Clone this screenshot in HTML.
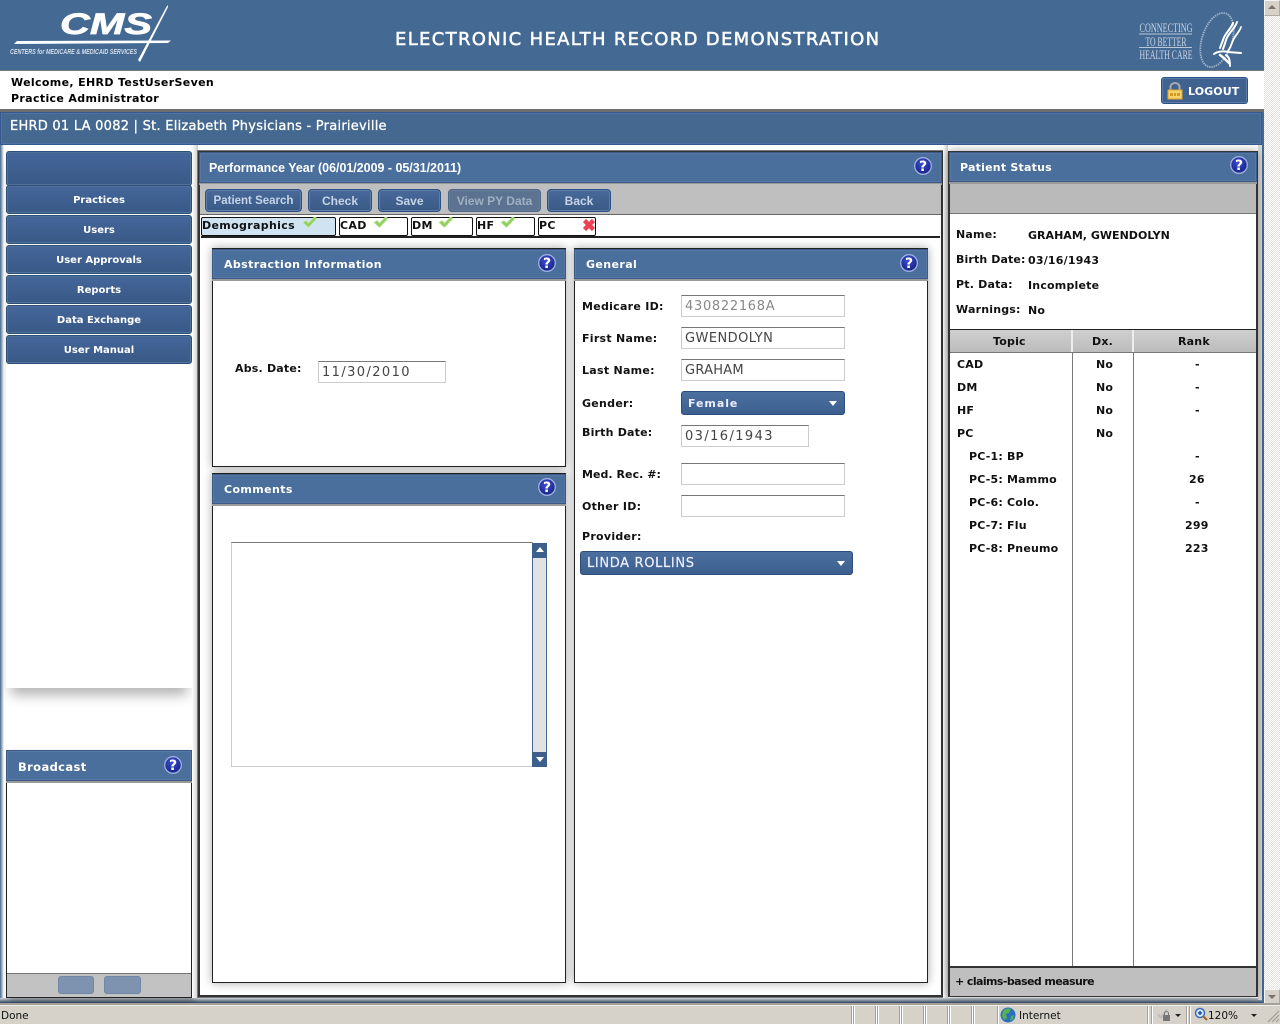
<!DOCTYPE html>
<html><head><meta charset="utf-8"><style>
html,body{margin:0;padding:0;width:1280px;height:1024px;overflow:hidden;background:#fff}
*{box-sizing:border-box}
div,span,svg{position:absolute}
body{font-family:"DejaVu Sans","Liberation Sans",sans-serif;font-size:11px;color:#111}
.t{white-space:nowrap;line-height:14px;font-weight:bold}
.lb{letter-spacing:.28px}
.ps{letter-spacing:.2px}
.nav{left:6px;width:186px;height:29px;background:linear-gradient(#44669a,#395a86);border:1px solid #2f4e78;border-radius:3px;box-shadow:inset 0 0 0 1px #4f7099;color:#fff;text-align:center;font:bold 10px/29px "DejaVu Sans",sans-serif}
.btn{top:189px;height:23px;background:linear-gradient(#48699a,#3a5a86);border:1px solid #2f5082;border-radius:4px;box-shadow:inset 0 0 0 1px #5b7ca5;color:#c5d4e6;text-align:center;font:bold 12px/22px "Liberation Sans",sans-serif}
.pnl{background:#fff;border:1px solid #222;box-shadow:0 0 9px rgba(0,0,0,.35)}
.hd{height:30px;background:#4a6f9c;border:1px solid #3a5a85;box-shadow:inset 0 0 0 1px #5878a3,0 2px 0 #9a9a9a;color:#fff;font:bold 11px/29px "DejaVu Sans",sans-serif;letter-spacing:.4px;padding-left:11px;white-space:nowrap}
.q{width:18px;height:18px}
.tab{top:217px;height:19px;border:1px solid #111;background:#fff;border-radius:2px;font:bold 11px/16px "DejaVu Sans",sans-serif;letter-spacing:.35px;padding-left:0}
.inp{background:#fff;border:1px solid #ccc;border-top-color:#777;color:#444;font:13px/22px "DejaVu Sans",sans-serif;letter-spacing:.85px;padding-left:3px;white-space:nowrap}
.sel{background:linear-gradient(#4b709f,#3c5f8e);border:1px solid #2d4e7c;border-radius:3px;color:#eef;white-space:nowrap}
.sel:after{content:"";position:absolute;right:7px;top:9px;border:4px solid transparent;border-top:5px solid #fff;border-bottom:0}
.sb{background:#d6d2ca}
.sep{top:1006px;width:1px;height:18px;background:#a5a196;box-shadow:1px 0 0 #fff}
</style></head><body>
<svg width="1" height="1" style="left:-10px;top:-10px"><defs>
<radialGradient id="qg" cx=".45" cy=".35" r=".7"><stop offset="0" stop-color="#3a4ed0"/><stop offset="1" stop-color="#14207f"/></radialGradient>
<g id="q"><circle cx="9" cy="9" r="8.300" fill="url(#qg)" stroke="#9fb0e0" stroke-width="1.300"/><text x="9" y="14" font-family="DejaVu Sans" font-weight="bold" font-size="14" fill="#fff" text-anchor="middle">?</text></g>
<g id="ck"><path d="M1 6.500l3-2 2.500 2.500 6-6 2.500 1.500-8.500 9z" fill="#8fd05c" stroke="#c4e4a6" stroke-width=".8"/></g>
</defs></svg>

<div style="left:0;top:0;width:1264px;height:70px;background:#446993"></div>
<div style="left:0;top:70px;width:1264px;height:1px;background:#777"></div>
<div style="left:0;top:71px;width:1264px;height:38px;background:#fff"></div>
<div style="left:0;top:109px;width:1264px;height:3px;background:#6f6f6f"></div>

<!-- CMS logo -->
<svg style="left:0;top:0" width="180" height="70">
<path d="M167.500 5 L168 7 L140 62 L138 60z" fill="#fff"/>
<path d="M17 41 L171 40.500 L168 43 L14 44z" fill="#fff"/>
<text x="60" y="34" font-family="Liberation Sans" font-weight="bold" font-style="italic" font-size="30" fill="#fff" stroke="#fff" stroke-width=".7" textLength="92" lengthAdjust="spacingAndGlyphs">CMS</text>
<text x="10" y="54" font-family="Liberation Sans" font-style="italic" font-weight="bold" font-size="7.500" fill="#d5deea" textLength="127" lengthAdjust="spacingAndGlyphs">CENTERS for MEDICARE &amp; MEDICAID SERVICES</text>
</svg>
<div class="t" style="left:395px;top:29px;color:#fff;font-size:18px;line-height:22px;font-weight:normal;-webkit-text-stroke:.5px #fff;letter-spacing:1.32px">ELECTRONIC HEALTH RECORD DEMONSTRATION</div>

<!-- HHS -->
<svg style="left:1130px;top:8px" width="120" height="64">
<g font-family="Liberation Serif" font-size="12.500" fill="#c8d5e4" text-anchor="middle">
<text x="36" y="24" textLength="53" lengthAdjust="spacingAndGlyphs">CONNECTING</text>
<text x="36" y="38" textLength="41" lengthAdjust="spacingAndGlyphs">TO BETTER</text>
<text x="36" y="51" textLength="53" lengthAdjust="spacingAndGlyphs">HEALTH CARE</text></g>
<path d="M9 26h53M9 39.500h53" stroke="#b9c7d8" stroke-width="1"/>
<ellipse cx="87" cy="32" rx="15" ry="28" fill="none" stroke="#9fb2c9" stroke-width="1.800" stroke-dasharray="1.500 .8" transform="rotate(18 87 32)"/>
<g fill="none" stroke="#fff" stroke-linecap="round">
<path d="M107 14c-2 7-9 11-11 18-1 4-2 6-3 9" stroke-width="2"/>
<path d="M103 15c-2 6-8 10-10 17-1 3-2 5-3 8" stroke-width="2"/>
<path d="M111 19c-2 6-7 9-9 16-1 3-2 5-4 8" stroke-width="1.800"/>
<path d="M84 46c4-3 10-3 14-2l13 1" stroke-width="2"/>
<path d="M90 47c3 2 6 5 9 8" stroke-width="2.500"/>
<path d="M96 47c3 2 4 5 4 11" stroke-width="2"/>
</g>
</svg>

<div class="t" style="left:11px;top:75px;color:#000;line-height:16px;letter-spacing:.35px">Welcome, EHRD TestUserSeven<br>Practice Administrator</div>

<div style="left:1161px;top:77px;width:87px;height:27px;background:#3f6290;border:1px solid #2f5082;border-radius:3px;box-shadow:inset 0 0 0 1px #5a7ca6"></div>
<svg style="left:1167px;top:82px" width="16" height="18"><path d="M3.500 8V5a4.500 4 0 0 1 9 0v3" fill="none" stroke="#a8a8a8" stroke-width="2"/><rect x="1" y="8" width="14" height="9" fill="#f6d468" stroke="#e3a52e"/><path d="M3 11h3v3H3zM7 11h2v3H7zM10 11h3v3h-3z" fill="#d49a28"/></svg>
<div class="t" style="left:1188px;top:85px;color:#fff;font-size:11px;letter-spacing:.1px">LOGOUT</div>

<!-- practice bar -->
<div style="left:0;top:112px;width:1262px;height:33px;background:#44688f;border:1px solid #35598f;box-shadow:inset 0 0 0 1px #4f73a3"></div>
<div class="t" style="left:10px;top:118px;color:#fff;font-size:13px;line-height:18px;font-weight:normal;-webkit-text-stroke:.3px #fff;letter-spacing:.25px">EHRD 01 LA 0082 | St. Elizabeth Physicians - Prairieville</div>

<!-- frame edges -->
<div style="left:0;top:145px;width:1262px;height:853px;background:#fff"></div>
<div style="left:0;top:145px;width:4px;height:853px;background:linear-gradient(90deg,#44688f,#fff)"></div>
<div style="left:0;top:998px;width:1264px;height:5px;background:linear-gradient(#cfd3d8,#2f4562)"></div>
<div style="left:1258px;top:145px;width:4px;height:855px;background:#d8d8d8"></div>
<div style="left:1262px;top:112px;width:2px;height:893px;background:#446993"></div>

<!-- left nav -->
<div style="left:6px;top:151px;width:186px;height:537px;background:#fff;box-shadow:0 12px 12px -5px rgba(0,0,0,.3)"></div>
<div class="nav" style="top:151px;height:35px"></div>
<div class="nav" style="top:185px">Practices</div>
<div class="nav" style="top:215px">Users</div>
<div class="nav" style="top:245px">User Approvals</div>
<div class="nav" style="top:275px">Reports</div>
<div class="nav" style="top:305px">Data Exchange</div>
<div class="nav" style="top:335px">User Manual</div>

<!-- broadcast -->
<div style="left:6px;top:750px;width:186px;height:248px;background:#fff;border:1px solid #222;box-shadow:3px 3px 6px rgba(0,0,0,.3)"></div>
<div class="hd" style="left:6px;top:750px;width:186px;height:31px;font-size:11.500px;letter-spacing:.37px;line-height:33px">Broadcast</div>
<svg class="q" style="left:164px;top:756px"><use href="#q"/></svg>
<div style="left:7px;top:973px;width:184px;height:24px;background:#c2c2c2;border-top:1px solid #777"></div>
<div style="left:58px;top:976px;width:36px;height:18px;background:#7d93b0;border:1px solid #7088a8;border-radius:3px"></div>
<div style="left:104px;top:976px;width:37px;height:18px;background:#7d93b0;border:1px solid #7088a8;border-radius:3px"></div>

<!-- center -->
<div style="left:192px;top:145px;width:6px;height:853px;background:linear-gradient(90deg,#fff,#ccc)"></div>
<div style="left:198px;top:151px;width:745px;height:846px;background:#fff;border:2px solid #333;box-shadow:0 0 0 1px #777"></div>
<div class="hd" style="left:199px;top:152px;width:743px;height:31px;font:bold 12.450px/31px 'Liberation Sans',sans-serif;letter-spacing:0;padding-left:9px">Performance Year (06/01/2009 - 05/31/2011)</div>
<svg class="q" style="left:914px;top:157px"><use href="#q"/></svg>
<div style="left:200px;top:184px;width:741px;height:31px;background:#bfbfbf;border-bottom:1px solid #666"></div>
<div class="btn" style="left:205px;width:97px;font-size:11.500px">Patient Search</div>
<div class="btn" style="left:308px;width:64px">Check</div>
<div class="btn" style="left:378px;width:63px">Save</div>
<div class="btn" style="left:448px;width:93px;background:#5b7290;color:#9fb0c2;box-shadow:inset 0 0 0 1px #667c99;border-color:#4d6686">View PY Data</div>
<div class="btn" style="left:547px;width:64px">Back</div>

<div style="left:201px;top:236px;width:739px;height:2px;background:#222"></div>
<div class="tab" style="left:201px;width:135px;background:#cfe3f2">Demographics</div>
<div class="tab" style="left:339px;width:69px">CAD</div>
<div class="tab" style="left:411px;width:62px">DM</div>
<div class="tab" style="left:476px;width:59px">HF</div>
<div class="tab" style="left:538px;width:58px">PC</div>
<svg style="left:302px;top:216px" width="16" height="13"><use href="#ck"/></svg>
<svg style="left:373px;top:216px" width="16" height="13"><use href="#ck"/></svg>
<svg style="left:438px;top:216px" width="16" height="13"><use href="#ck"/></svg>
<svg style="left:500px;top:216px" width="16" height="13"><use href="#ck"/></svg>
<svg style="left:581px;top:217px" width="16" height="16"><path d="M3.500 3.500L12.500 12.500M12.500 3.500L3.500 12.500" stroke="#ea4452" stroke-width="4.500"/></svg>

<!-- abstraction -->
<div class="pnl" style="left:212px;top:248px;width:354px;height:219px"></div>
<div class="hd" style="left:212px;top:249px;width:354px">Abstraction Information</div>
<svg class="q" style="left:538px;top:254px"><use href="#q"/></svg>
<div class="t" style="left:235px;top:362px;letter-spacing:.2px">Abs. Date:</div>
<div class="inp" style="left:318px;top:361px;width:128px;height:22px;letter-spacing:1.400px">11/30/2010</div>

<!-- comments -->
<div class="pnl" style="left:212px;top:473px;width:354px;height:510px"></div>
<div class="hd" style="left:212px;top:474px;width:354px">Comments</div>
<svg class="q" style="left:538px;top:478px"><use href="#q"/></svg>
<div style="left:231px;top:542px;width:302px;height:225px;border:1px solid #ccc;border-top-color:#777"></div>
<div style="left:532px;top:543px;width:15px;height:224px;background:#e2e2e2;border:1px solid #46699a"></div>
<div style="left:532px;top:543px;width:15px;height:15px;background:#3d5f8c"></div>
<div style="left:532px;top:752px;width:15px;height:15px;background:#3d5f8c"></div>
<div style="left:536px;top:547px;border:4px solid transparent;border-bottom:5px solid #fff;border-top:0"></div>
<div style="left:536px;top:757px;border:4px solid transparent;border-top:5px solid #fff;border-bottom:0"></div>

<!-- general -->
<div class="pnl" style="left:574px;top:248px;width:354px;height:735px"></div>
<div class="hd" style="left:574px;top:249px;width:354px">General</div>
<svg class="q" style="left:900px;top:254px"><use href="#q"/></svg>
<div class="t lb" style="left:582px;top:300px">Medicare ID:</div>
<div class="inp" style="left:681px;top:295px;width:164px;height:22px;color:#888;letter-spacing:.7px">430822168A</div>
<div class="t lb" style="left:582px;top:332px">First Name:</div>
<div class="inp" style="left:681px;top:327px;width:164px;height:22px;letter-spacing:.45px">GWENDOLYN</div>
<div class="t lb" style="left:582px;top:364px">Last Name:</div>
<div class="inp" style="left:681px;top:359px;width:164px;height:22px;letter-spacing:.25px">GRAHAM</div>
<div class="t lb" style="left:582px;top:397px">Gender:</div>
<div class="sel" style="left:681px;top:391px;width:164px;height:24px;font:bold 11px/24px 'DejaVu Sans',sans-serif;letter-spacing:.95px;padding-left:6px">Female</div>
<div class="t lb" style="left:582px;top:426px;letter-spacing:.2px">Birth Date:</div>
<div class="inp" style="left:681px;top:425px;width:128px;height:22px;letter-spacing:1.400px">03/16/1943</div>
<div class="t lb" style="left:582px;top:468px;letter-spacing:.05px">Med. Rec. #:</div>
<div class="inp" style="left:681px;top:463px;width:164px;height:22px"></div>
<div class="t lb" style="left:582px;top:500px">Other ID:</div>
<div class="inp" style="left:681px;top:495px;width:164px;height:22px"></div>
<div class="t lb" style="left:582px;top:530px">Provider:</div>
<div class="sel" style="left:580px;top:551px;width:273px;height:24px;font:13px/24px 'DejaVu Sans',sans-serif;letter-spacing:.65px;padding-left:6px;-webkit-text-stroke:.2px #eef">LINDA ROLLINS</div>

<!-- patient status -->
<div style="left:943px;top:145px;width:5px;height:853px;background:linear-gradient(90deg,#fff,#ccc)"></div>
<div class="pnl" style="left:948px;top:151px;width:310px;height:846px;border-width:2px;border-color:#333"></div>
<div class="hd" style="left:949px;top:152px;width:308px;height:30px;letter-spacing:.22px;padding-left:10px">Patient Status</div>
<svg class="q" style="left:1230px;top:156px"><use href="#q"/></svg>
<div style="left:950px;top:184px;width:306px;height:30px;background:#bababa;border-bottom:1px solid #777"></div>
<div class="t ps" style="left:956px;top:228px">Name:</div>
<div class="t ps" style="left:1028px;top:229px;letter-spacing:.02px">GRAHAM, GWENDOLYN</div>
<div class="t ps" style="left:956px;top:253px;letter-spacing:.12px">Birth Date:</div>
<div class="t ps" style="left:1028px;top:254px">03/16/1943</div>
<div class="t ps" style="left:956px;top:278px">Pt. Data:</div>
<div class="t ps" style="left:1028px;top:279px">Incomplete</div>
<div class="t ps" style="left:956px;top:303px">Warnings:</div>
<div class="t ps" style="left:1028px;top:304px">No</div>

<div style="left:950px;top:329px;width:306px;height:24px;background:linear-gradient(#cfcfcf,#bcbcbc);border-top:1px solid #222;border-bottom:1px solid #777"></div>
<div style="left:1071px;top:330px;width:2px;height:22px;background:#eee"></div>
<div style="left:1132px;top:330px;width:2px;height:22px;background:#eee"></div>
<div style="left:1072px;top:353px;width:1px;height:613px;background:#777"></div>
<div style="left:1133px;top:353px;width:1px;height:613px;background:#777"></div>
<div class="t ps" style="left:993px;top:335px">Topic</div>
<div class="t ps" style="left:1092px;top:335px">Dx.</div>
<div class="t ps" style="left:1178px;top:335px">Rank</div>

<div class="t ps" style="left:957px;top:358px">CAD</div><div class="t ps" style="left:1096px;top:358px">No</div><div class="t" style="left:1195px;top:358px">-</div>
<div class="t ps" style="left:957px;top:381px">DM</div><div class="t ps" style="left:1096px;top:381px">No</div><div class="t" style="left:1195px;top:381px">-</div>
<div class="t ps" style="left:957px;top:404px">HF</div><div class="t ps" style="left:1096px;top:404px">No</div><div class="t" style="left:1195px;top:404px">-</div>
<div class="t ps" style="left:957px;top:427px">PC</div><div class="t ps" style="left:1096px;top:427px">No</div>
<div class="t ps" style="left:969px;top:450px">PC-1: BP</div><div class="t" style="left:1195px;top:450px">-</div>
<div class="t ps" style="left:969px;top:473px">PC-5: Mammo</div><div class="t ps" style="left:1189px;top:473px">26</div>
<div class="t ps" style="left:969px;top:496px">PC-6: Colo.</div><div class="t" style="left:1195px;top:496px">-</div>
<div class="t ps" style="left:969px;top:519px">PC-7: Flu</div><div class="t ps" style="left:1185px;top:519px">299</div>
<div class="t ps" style="left:969px;top:542px">PC-8: Pneumo</div><div class="t ps" style="left:1185px;top:542px">223</div>

<div style="left:950px;top:966px;width:306px;height:30px;background:#bfbfbf;border-top:2px solid #333"></div>
<div class="t" style="left:955px;top:975px;letter-spacing:-.58px">+ claims-based measure</div>

<!-- scrollbar -->
<div style="left:1264px;top:0;width:16px;height:1006px;background:#ece9e0;background-image:repeating-conic-gradient(#e4e2dc 0 25%,#fff 0 50%);background-size:2px 2px"></div>
<div style="left:1264px;top:0;width:16px;height:16px;background:#d6d2ca;border:1px solid #b0aca0;border-top-color:#f5f5f5;border-left-color:#f5f5f5"></div>
<div style="left:1268px;top:5px;border:4px solid transparent;border-bottom:4px solid #77736a;border-top:0"></div>
<div style="left:1264px;top:989px;width:16px;height:16px;background:#d6d2ca;border:1px solid #b0aca0;border-top-color:#f5f5f5;border-left-color:#f5f5f5"></div>
<div style="left:1268px;top:995px;border:4px solid transparent;border-top:4px solid #77736a;border-bottom:0"></div>

<!-- status bar -->
<div class="sb" style="left:0;top:1003px;width:1280px;height:21px;border-top:2px solid #a5a196;box-shadow:inset 0 1px 0 #eee"></div>
<div style="left:1px;top:1009px;font:10.500px/14px 'DejaVu Sans',sans-serif;color:#111">Done</div>
<div class="sep" style="left:851px"></div><div class="sep" style="left:853px"></div>
<div class="sep" style="left:875px"></div><div class="sep" style="left:877px"></div>
<div class="sep" style="left:899px"></div><div class="sep" style="left:901px"></div>
<div class="sep" style="left:923px"></div><div class="sep" style="left:925px"></div>
<div class="sep" style="left:947px"></div><div class="sep" style="left:949px"></div>
<div class="sep" style="left:971px"></div><div class="sep" style="left:973px"></div>
<div class="sep" style="left:997px"></div><div class="sep" style="left:1147px"></div>
<div class="sep" style="left:1151px"></div><div class="sep" style="left:1186px"></div><div class="sep" style="left:1189px"></div>
<svg style="left:1000px;top:1007px" width="16" height="16"><circle cx="8" cy="8" r="7.500" fill="#2a6fc4"/><path d="M3 4c3-3 6-3 8-2l-2 4-3 1 1 4-3 2-2-4z" fill="#5ab04c"/><path d="M11 9l3-1-1 4-3 2z" fill="#5ab04c"/></svg>
<div style="left:1019px;top:1009px;font:10.500px/14px 'DejaVu Sans',sans-serif;color:#111">Internet</div>
<svg style="left:1155px;top:1007px" width="16" height="16"><path d="M2 8l4 4 7-10-2 0-5 7-2-2z" fill="#bbb"/><rect x="8" y="8" width="7" height="6" fill="#777"/><path d="M9.500 8V6.500a2 2 0 0 1 4 0V8" stroke="#777" fill="none"/></svg>
<div style="left:1175px;top:1014px;border:3px solid transparent;border-top:3px solid #222;border-bottom:0"></div>
<svg style="left:1194px;top:1007px" width="14" height="15"><circle cx="6" cy="6" r="4.500" fill="#d8e6fa" stroke="#3a6ec0" stroke-width="1.500"/><path d="M4 6h4M6 4v4" stroke="#1a4aa0" stroke-width="1.500"/><path d="M9 9l4 4" stroke="#a06020" stroke-width="2"/></svg>
<div style="left:1208px;top:1009px;font:10.500px/14px 'DejaVu Sans',sans-serif;color:#111">120%</div>
<div style="left:1251px;top:1014px;border:3px solid transparent;border-top:3px solid #222;border-bottom:0"></div>
<svg style="left:1266px;top:1009px" width="14" height="14"><path d="M13 2L2 13M13 6L6 13M13 10L10 13" stroke="#9a968c" stroke-width="1"/></svg>
</body></html>
